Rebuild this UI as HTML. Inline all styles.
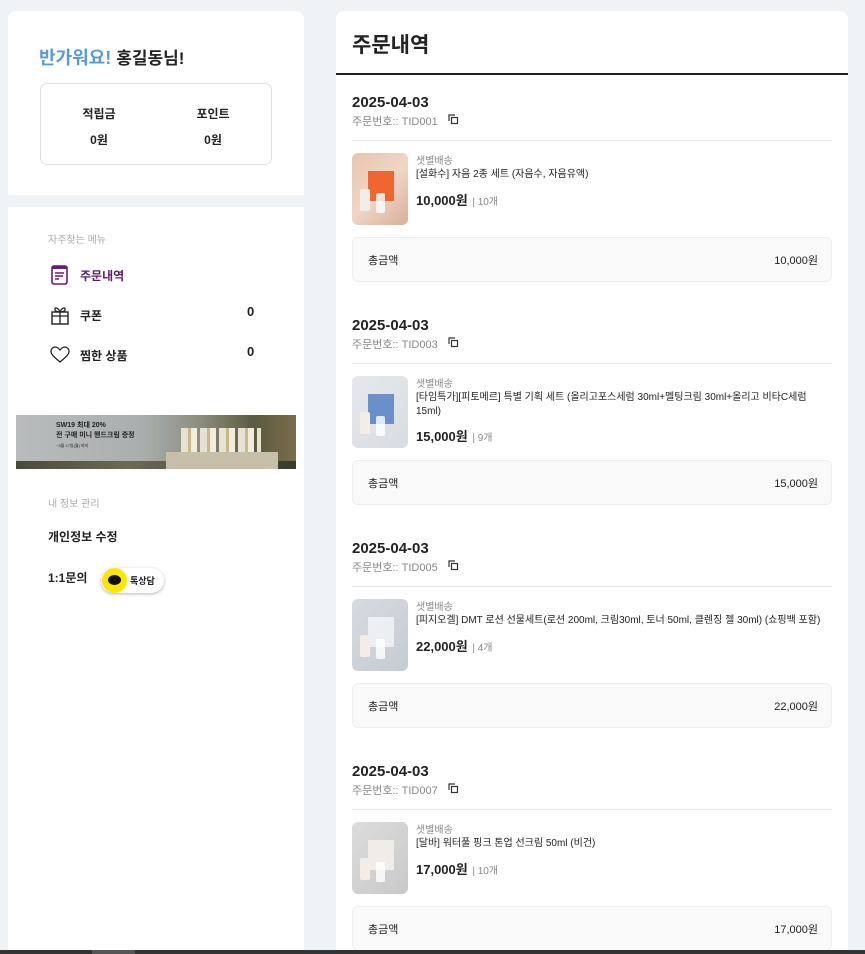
<!DOCTYPE html>
<html><head><meta charset="utf-8"><style>
*{box-sizing:border-box;margin:0;padding:0}
body{width:865px;height:954px;overflow:hidden;background:#eff3f6;font-family:"Liberation Sans","Noto Sans CJK KR",sans-serif;color:#222;position:relative}
.card{position:absolute;background:#fff}
.abs{position:absolute;white-space:nowrap}
.sum{position:absolute;left:352px;width:480px;height:45px;background:#f9f9f9;border:1px solid #eee;border-radius:6px;font-size:11px}
.sum span{position:absolute;top:14px}
.img{position:absolute;left:352px;width:56px;height:72px;border-radius:6px;overflow:hidden}
</style></head><body>
<div class="card" style="left:8px;top:11px;width:296px;height:184px;border-radius:8px 8px 0 0"></div>
<div class="abs" style="left:39px;top:44px;font-size:18px;font-weight:bold"><span style="color:#5b9bd5">반가워요!</span> <span style="font-size:17px">홍길동님!</span></div>
<div class="abs" style="left:40px;top:83px;width:232px;height:82px;border:1px solid #ddd;border-radius:7px;white-space:normal;font-size:12px;font-weight:bold;text-align:center">
<div style="position:absolute;left:30px;top:21px;width:56px">적립금</div><div style="position:absolute;left:30px;top:47px;width:56px">0원</div>
<div style="position:absolute;left:144px;top:21px;width:56px">포인트</div><div style="position:absolute;left:144px;top:47px;width:56px">0원</div></div>

<div class="card" style="left:8px;top:207px;width:296px;height:747px"></div>
<div class="abs" style="left:48px;top:231px;font-size:10px;color:#aaa">자주찾는 메뉴</div>
<svg class="abs" style="left:51px;top:265px" width="17" height="20" viewBox="0 0 17 20"><rect x="1" y="1" width="15" height="18" rx="2" fill="none" stroke="#6a1b7a" stroke-width="1.6"/><rect x="1" y="1" width="15" height="3" fill="#6a1b7a"/><path d="M4 8h9M4 11h8M4 14h4" stroke="#6a1b7a" stroke-width="1.4"/></svg>
<div class="abs" style="left:80px;top:267px;font-size:12px;font-weight:bold;color:#5e1a6e">주문내역</div>
<svg class="abs" style="left:51px;top:306px" width="18" height="19" viewBox="0 0 18 19"><rect x="1" y="6" width="16" height="12" fill="none" stroke="#222" stroke-width="1.4"/><path d="M9 6v12M1 10h16M9 6C7 1 3 1 4 4c.5 1.5 3 2 5 2M9 6c2-5 6-5 5-2-.5 1.5-3 2-5 2" fill="none" stroke="#222" stroke-width="1.3"/></svg>
<div class="abs" style="left:80px;top:307px;font-size:12px;font-weight:bold">쿠폰</div>
<div class="abs" style="left:247px;top:304px;font-size:13px;font-weight:bold">0</div>
<svg class="abs" style="left:50px;top:346px" width="20" height="17" viewBox="0 0 20 17"><path d="M10 16C4 11 1 8.5 1 5.2 1 2.8 3 1 5.3 1 7.3 1 8.6 2.2 10 4c1.4-1.8 2.7-3 4.7-3C17 1 19 2.8 19 5.2 19 8.5 16 11 10 16z" fill="none" stroke="#222" stroke-width="1.3"/></svg>
<div class="abs" style="left:80px;top:347px;font-size:12px;font-weight:bold">찜한 상품</div>
<div class="abs" style="left:247px;top:344px;font-size:13px;font-weight:bold">0</div>

<div class="abs" style="left:16px;top:415px;width:280px;height:54px;background:linear-gradient(90deg,#b9bcbd 0%,#a9aeae 45%,#8e8f80 65%,#5b5a40 85%,#7a6d4c 100%);overflow:hidden">
<div style="position:absolute;left:0;bottom:0;width:280px;height:8px;background:linear-gradient(90deg,#4a4a38,#6a6a55 40%,#3a3a2a)"></div>
<div style="position:absolute;left:150px;top:37px;width:112px;height:17px;background:#c8bfaa"></div>
<div style="position:absolute;left:165px;top:13px;width:80px;height:24px;background:repeating-linear-gradient(90deg,#e8e2d4 0 7px,#c9b88a 7px 10px,#f2ece0 10px 16px,transparent 16px 19px)"></div>
<div style="position:absolute;left:40px;top:6px;font-size:7px;font-weight:bold;color:#222;line-height:10px">SW19 최대 20%<br>전 구매 미니 핸드크림 증정<br><span style="font-size:4px;font-weight:normal">~3월 17일(월) 까지</span></div></div>

<div class="abs" style="left:48px;top:495px;font-size:10px;color:#aaa">내 정보 관리</div>
<div class="abs" style="left:48px;top:528px;font-size:12px;font-weight:bold">개인정보 수정</div>
<div class="abs" style="left:48px;top:569px;font-size:12px;font-weight:bold">1:1문의</div>
<div class="abs" style="left:101px;top:568px;width:63px;height:25px;border-radius:13px;background:#fff;box-shadow:0 1px 3px rgba(0,0,0,.3)">
<div style="position:absolute;left:1px;top:0;width:25px;height:25px;border-radius:50%;background:#fee500"></div>
<div style="position:absolute;left:7px;top:7px;width:13px;height:10px;border-radius:50%;background:#111"></div>
<div style="position:absolute;left:29px;top:6px;font-size:9px;font-weight:bold">톡상담</div></div>

<div class="card" style="left:336px;top:11px;width:512px;height:943px;border-radius:8px 8px 0 0"></div>
<div class="abs" style="left:352px;top:29px;font-size:21px;font-weight:bold">주문내역</div>
<div class="abs" style="left:336px;top:73px;width:512px;height:2px;background:#222"></div>

<div id="b"></div>
<script>
var d=[["TID001","[설화수] 자음 2종 세트 (자음수, 자음유액)","10,000원","10개","linear-gradient(135deg,#e8c4ae,#f0d6c6 50%,#d9b09a)","#f05a1e"],
["TID003","[타임특가][피토메르] 특별 기획 세트 (올리고포스세럼 30ml+멜팅크림 30ml+올리고 비타C세럼<br>15ml)","15,000원","9개","linear-gradient(135deg,#e6e8ec,#d8dce2)","#5d86c8"],
["TID005","[피지오겔] DMT 로션 선물세트(로션 200ml, 크림30ml, 토너 50ml, 클렌징 젤 30ml) (쇼핑백 포함)","22,000원","4개","linear-gradient(135deg,#d6dbe0,#c4cbd2)","#eef2f5"],
["TID007","[달바] 워터풀 핑크 톤업 선크림 50ml (비건)","17,000원","10개","linear-gradient(135deg,#dcdcdc,#c9c9c9)","#f3f0ea"]];
var h="";
d.forEach(function(o,i){var t=94+i*223;
h+='<div class="abs" style="left:352px;top:'+t+'px;font-size:15px;font-weight:bold;color:#222">2025-04-03</div>';
h+='<div class="abs" style="left:352px;top:'+(t+19)+'px;font-size:11px;color:#888">주문번호:: '+o[0]+'</div>';
h+='<svg class="abs" style="left:448px;top:'+(t+20)+'px" width="11" height="11" viewBox="0 0 11 11"><path d="M1 7V1h6" fill="none" stroke="#333" stroke-width="1.2"/><rect x="3.5" y="3.5" width="6" height="6" fill="none" stroke="#333" stroke-width="1.2"/></svg>';
h+='<div class="abs" style="left:352px;top:'+(t+46)+'px;width:480px;height:1px;background:#e8e8e8"></div>';
h+='<div class="img" style="top:'+(t+59)+'px;background:'+o[4]+'"><div style="position:absolute;left:16px;top:18px;width:26px;height:30px;background:'+o[5]+';opacity:.9"></div><div style="position:absolute;left:8px;top:36px;width:10px;height:22px;background:#f4ece6;border-radius:2px"></div><div style="position:absolute;left:24px;top:40px;width:9px;height:20px;background:#fff;opacity:.8;border-radius:2px"></div></div>';
h+='<div class="abs" style="left:416px;top:'+(t+58)+'px;font-size:10px;color:#888">샛별배송</div>';
h+='<div class="abs" style="left:416px;top:'+(t+74)+'px;font-size:10px;line-height:14px;color:#222">'+o[1]+'</div>';
var py=t+(i==1?109:96);
h+='<div class="abs" style="left:416px;top:'+py+'px;font-size:13px;font-weight:bold">'+o[2]+' <span style="font-size:10px;font-weight:normal;color:#888;margin-left:1px">| '+o[3]+'</span></div>';
h+='<div class="sum" style="top:'+(t+143)+'px"><span style="left:15px">총금액</span><span style="right:13px">'+o[2]+'</span></div>';
});
document.getElementById("b").innerHTML=h;
</script>
<div class="abs" style="left:0;top:950px;width:865px;height:4px;background:#333"></div>
<div class="abs" style="left:92px;top:950px;width:43px;height:4px;background:#555"></div>
</body></html>
